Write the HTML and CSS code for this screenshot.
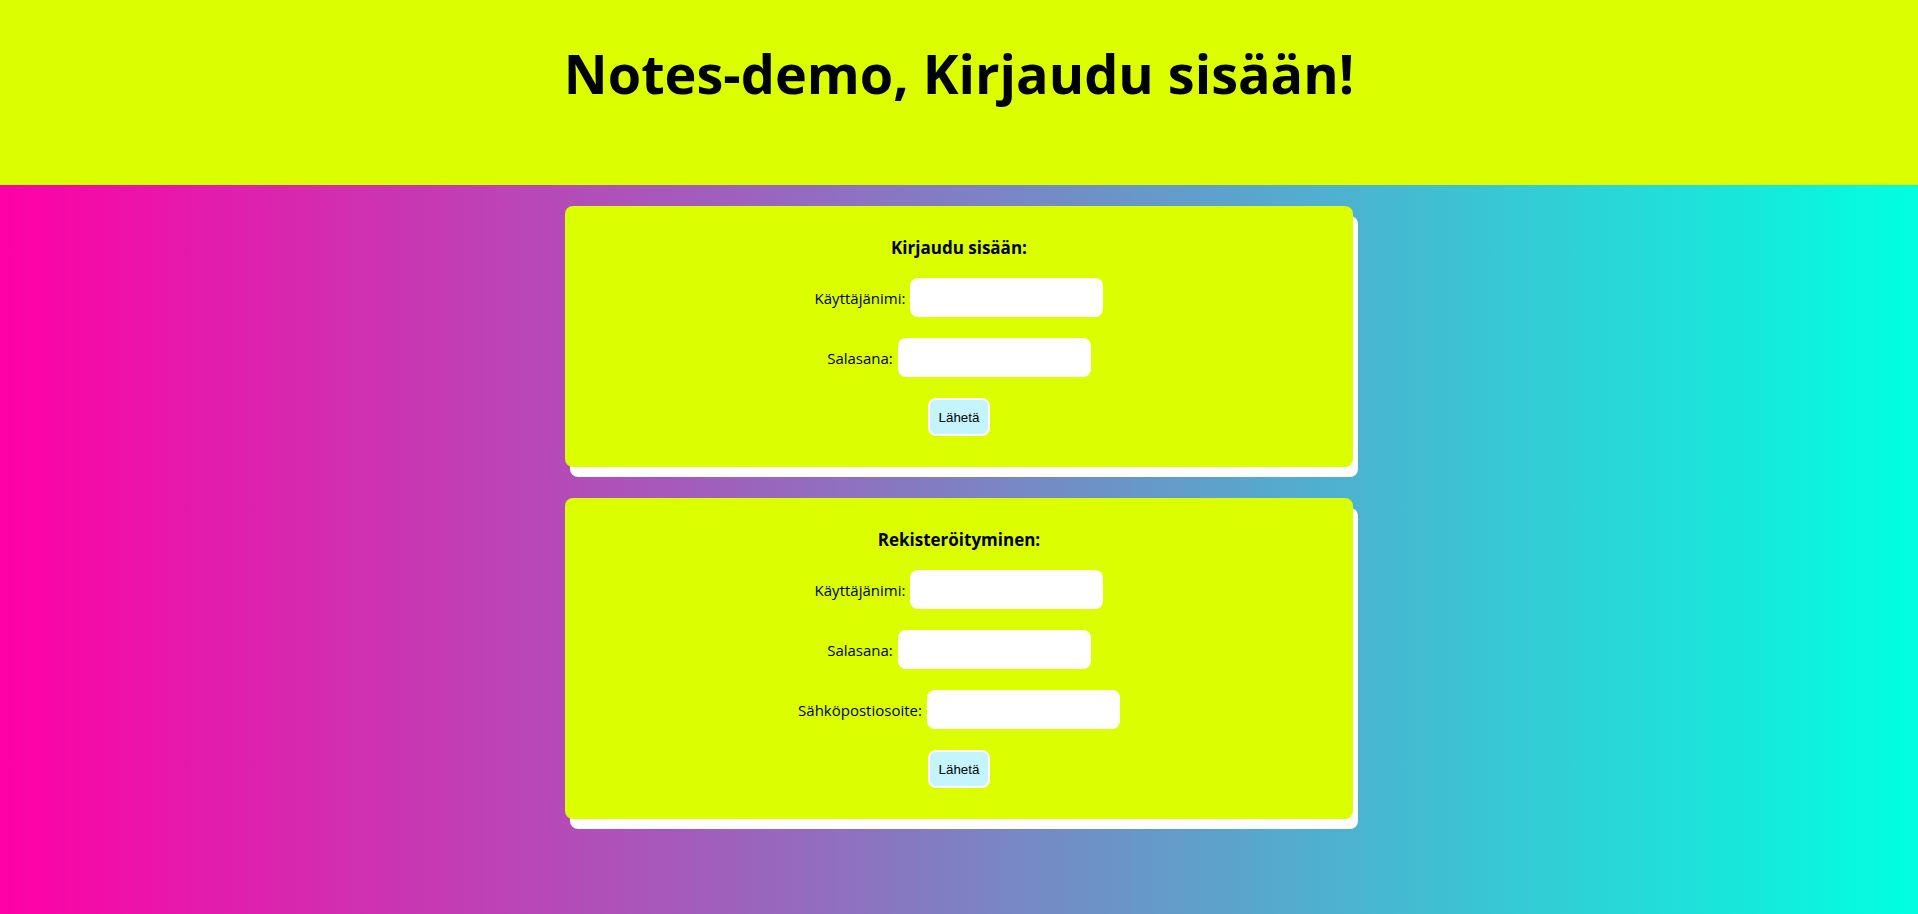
FILE: index.html
```html
<!DOCTYPE html>
<html lang="fi">
<head>
<meta charset="utf-8">
<title>Notes-demo</title>
<link rel="stylesheet" href="styles.css">
</head>
<body>
<header class="top">
  <h1 class="title">Notes-demo, Kirjaudu sisään!</h1>
</header>
<main class="content">
  <section class="card">
    <h3 class="card-title">Kirjaudu sisään:</h3>
    <form class="form">
      <div class="row"><label class="label">Käyttäjänimi:</label><input class="field" type="text"></div>
      <div class="row"><label class="label">Salasana:</label><input class="field" type="password"></div>
      <div class="row"><button class="send" type="button">Lähetä</button></div>
    </form>
  </section>
  <section class="card">
    <h3 class="card-title">Rekisteröityminen:</h3>
    <form class="form">
      <div class="row"><label class="label">Käyttäjänimi:</label><input class="field" type="text"></div>
      <div class="row"><label class="label">Salasana:</label><input class="field" type="password"></div>
      <div class="row"><label class="label">Sähköpostiosoite:</label><input class="field" type="email"></div>
      <div class="row"><button class="send" type="button">Lähetä</button></div>
    </form>
  </section>
</main>
</body>
</html>
```

FILE: styles.css
```css
html, body {
  margin: 0;
  padding: 0;
}
body {
  min-height: 100vh;
  background: linear-gradient(to right, #ff00a6, #00ffe1);
  font-family: "Open Sans", "Noto Sans", sans-serif;
  color: #000;
}
.top {
  background: #dbff00;
  height: 185px;
  box-sizing: border-box;
  padding-top: 37px;
}
.title {
  margin: 0;
  text-align: center;
  font-size: 54px;
  font-weight: 700;
  line-height: 72px;
}
.content {
  display: flex;
  flex-direction: column;
  align-items: center;
  gap: 31px;
  padding-top: 21px;
  padding-bottom: 40px;
}
.card {
  width: 788px;
  box-sizing: border-box;
  background: #dbff00;
  border-radius: 8px;
  box-shadow: 5px 10px 0 #fff;
  padding: 30px 0 31px;
  display: flex;
  flex-direction: column;
  align-items: center;
}
.card-title {
  margin: 0;
  font-size: 17px;
  font-weight: 700;
  line-height: 24px;
}
.form {
  margin-top: 18px;
  display: flex;
  flex-direction: column;
  align-items: center;
  gap: 21px;
}
.row {
  display: flex;
  align-items: center;
  gap: 5px;
}
.label {
  font-size: 15px;
  font-weight: 400;
}
.field {
  width: 193px;
  height: 39px;
  box-sizing: border-box;
  border: none;
  border-radius: 8px;
  background: #fff;
  padding: 0 10px;
  font-family: "Liberation Sans", Arial, sans-serif;
  font-size: 13.33px;
}
.send {
  width: 62px;
  height: 38px;
  box-sizing: border-box;
  background: #c4f5ff;
  border: 2px solid #fff;
  border-radius: 8px;
  padding: 0;
  font-family: "Liberation Sans", Arial, sans-serif;
  font-size: 13.33px;
  color: #000;
}
```
